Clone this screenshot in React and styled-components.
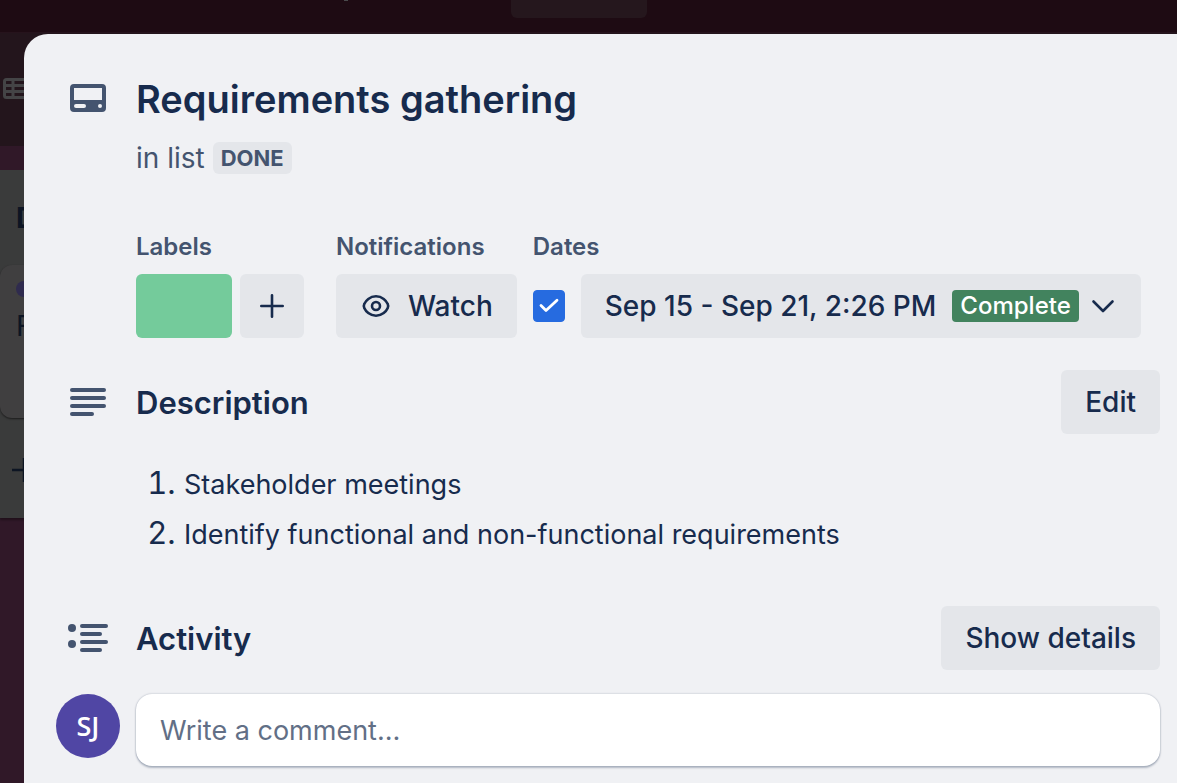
import React from "react";
import styled, { createGlobalStyle } from "styled-components";

const GlobalStyle = createGlobalStyle`
  *, *::before, *::after { box-sizing: border-box; }
  html, body, #root { height: 100%; }
  body {
    margin: 0;
    overflow: hidden;
    background: #301828;
    color: #172b4d;
    font-family: Inter, "Liberation Sans", sans-serif;
    -webkit-font-smoothing: antialiased;
  }
  h1, h2, h3, ol, p { margin: 0; padding: 0; }
  button, input { font-family: inherit; color: inherit; }
`;

/* Dimmed board behind the card dialog */
const Board = styled.div`
  display: flex;
  flex-direction: column;
  min-height: 100%;
`;

const TopBar = styled.div`
  display: flex;
  align-items: flex-start;
  height: 32px;
  padding-left: 344px;
  gap: 163px;
  background: #1e0b13;
`;

const MenuRemnant = styled.span`
  width: 4px;
  height: 1px;
  background: #4a4a4c;
`;

const CreateButton = styled.span`
  width: 136px;
  height: 18px;
  border-radius: 0 0 6px 6px;
  background: #25171d;
`;

const BoardHeader = styled.div`
  height: 114px;
  padding: 45px 0 0 3px;
  border-top: 1px solid #26131c;
  background: #23151c;
  color: #444446;
`;

const BoardList = styled.section`
  width: 300px;
  height: 348px;
  margin-top: 24px;
  padding-top: 30px;
  background: #3a3b3b;
  color: #0d1523;
  box-shadow: 0 2px 2px #00000055;
`;

const BoardListTitle = styled.h3`
  height: 65px;
  padding-left: 16px;
  font-size: 28px;
  line-height: 36px;
  font-weight: 700;
`;

const BoardCard = styled.div`
  height: 153px;
  padding: 16px 0 0 16px;
  border-radius: 12px;
  background: #403f40;
  box-shadow: 0 1px 2px #00000088;
  font-size: 28px;
  line-height: 40px;
`;

const BoardCardLabel = styled.div`
  width: 80px;
  height: 16px;
  margin-bottom: 9px;
  border-radius: 8px;
  background: #2f2b4e;
`;

const AddIcon = styled.svg`
  display: block;
  margin: 40px 0 0 12px;
`;

/* Card dialog */
const Dialog = styled.main`
  position: fixed;
  inset: 34px 0 0 24px;
  display: flex;
  flex-direction: column;
  padding: 40px 17px 0 32px;
  overflow: hidden;
  border-top-left-radius: 24px;
  background: #f0f1f4;
`;

const Row = styled.div`
  display: grid;
  grid-template-columns: 64px minmax(0, 1fr);
  column-gap: 16px;
  align-items: ${(p) => p.$align || "center"};
`;

const IconCell = styled.div`
  display: flex;
  justify-content: center;
  color: #44546f;
`;

const Indented = styled.div`
  margin-top: ${(p) => p.$top}px;
  padding-left: 80px;
`;

const Title = styled.h1`
  padding-top: 2px;
  font-size: 38px;
  line-height: 46px;
  font-weight: 600;
`;

const ListLine = styled.p`
  display: flex;
  align-items: center;
  gap: 8px;
  font-size: 28px;
  line-height: 32px;
  color: #44546f;
`;

const ListLink = styled.a`
  padding: 0 8px;
  border-radius: 6px;
  background: #e4e6ea;
  color: #44546f;
  font-size: 22px;
  font-weight: 700;
  text-decoration: none;
`;

const Fields = styled.div`
  display: flex;
  gap: ${(p) => p.$gap || 32}px;
`;

const Field = styled.div`
  display: flex;
  flex-direction: column;
  gap: 14px;
`;

const fieldHeading = `
  font-size: 24px;
  line-height: 26px;
  font-weight: 600;
  color: #44546f;
`;
const FieldTitle = styled.h3`${fieldHeading}`;
const FieldLabel = styled.label`${fieldHeading}`;

const FieldControls = styled.div`
  display: flex;
  align-items: center;
  gap: ${(p) => p.$gap}px;
`;

const Button = styled.button`
  display: flex;
  align-items: center;
  justify-content: center;
  flex: none;
  height: 64px;
  padding: 0 ${(p) => (p.$square ? 0 : 24)}px;
  width: ${(p) => (p.$square ? "64px" : "auto")};
  border: 0;
  border-radius: 6px;
  background: #e4e6ea;
  font-size: 28px;
  line-height: 40px;
  font-weight: 500;
  white-space: nowrap;
  cursor: pointer;
`;

const LabelSwatch = styled.button`
  width: 96px;
  height: 64px;
  border: 0;
  border-radius: 6px;
  background: #74cb9b;
  cursor: pointer;
`;

const WatchIcon = styled.svg`
  margin-right: 16px;
`;

const CheckWrap = styled.span`
  position: relative;
  display: flex;
  width: 32px;
  height: 32px;
`;

const Checkbox = styled.input`
  appearance: none;
  width: 32px;
  height: 32px;
  margin: 0;
  border: 1px solid #8590a2;
  border-radius: 4px;
  background: #fff;
  cursor: pointer;
  &:checked { background: #266be0; border-color: #266be0; }
  &:not(:checked) + svg { display: none; }
`;

const CheckMark = styled.svg`
  position: absolute;
  inset: 0;
  pointer-events: none;
`;

const Status = styled.span`
  margin: 0 10px 0 16px;
  padding: 0 8px;
  border-radius: 4px;
  background: #42835e;
  color: #fff;
  font-size: 24px;
  line-height: 32px;
  font-weight: 500;
`;

const SectionHead = styled.div`
  display: flex;
  align-items: center;
  justify-content: space-between;
`;

const SectionTitle = styled.h2`
  padding-top: 2px;
  font-size: 31px;
  line-height: 40px;
  font-weight: 600;
`;

const Steps = styled.ol`
  display: flex;
  flex-direction: column;
  gap: 10px;
  padding-left: 48px;
  font-size: 31px;
  line-height: 40px;
`;

const StepText = styled.span`
  font-size: 27px;
  line-height: 32px;
`;

const Avatar = styled.div`
  display: grid;
  place-items: center;
  width: 64px;
  height: 64px;
  border-radius: 50%;
  background: #5046a4;
  color: #fff;
  font-family: "Open Sans", "Noto Sans", sans-serif;
  font-size: 27px;
  line-height: 32px;
  font-weight: 600;
`;

const CommentInput = styled.input`
  width: 100%;
  height: 72px;
  padding: 0 24px;
  border: 0;
  border-radius: 16px;
  background: #fff;
  box-shadow: 0 2px 2px #091e4240, 0 0 2px #091e424f;
  font-size: 27px;
  outline: none;
  &::placeholder { color: #626f86; opacity: 1; }
`;

const Spaced = styled.section`
  margin-top: ${(p) => p.$top}px;
`;

function CardIcon() {
  return (
    <svg width="36" height="28" viewBox="0 0 36 28" aria-hidden="true">
      <path
        fill="currentColor"
        fillRule="evenodd"
        d="M4 0h28a4 4 0 0 1 4 4v20a4 4 0 0 1-4 4H4a4 4 0 0 1-4-4V4a4 4 0 0 1 4-4zM4 4v12h28V4zM6 20a2 2 0 0 0 0 4h8a2 2 0 0 0 0-4zM30 20a2 2 0 1 0 0 4a2 2 0 0 0 0-4z"
      />
    </svg>
  );
}

function TextIcon() {
  return (
    <svg width="36" height="28" viewBox="0 0 36 28" fill="currentColor" aria-hidden="true">
      <rect width="36" height="4" rx="2" />
      <rect y="8" width="36" height="4" rx="2" />
      <rect y="16" width="36" height="4" rx="2" />
      <rect y="24" width="24" height="4" rx="2" />
    </svg>
  );
}

function ActivityIcon() {
  return (
    <svg width="40" height="28" viewBox="0 0 40 28" fill="currentColor" aria-hidden="true">
      <circle cx="4" cy="4" r="4" />
      <circle cx="4" cy="20" r="4" />
      <rect x="12" width="28" height="4" rx="2" />
      <rect x="12" y="8" width="22" height="4" rx="2" />
      <rect x="12" y="16" width="28" height="4" rx="2" />
      <rect x="12" y="24" width="22" height="4" rx="2" />
    </svg>
  );
}

export default function App() {
  return (
    <>
      <GlobalStyle />
      <Board aria-hidden="true">
        <TopBar>
          <MenuRemnant />
          <CreateButton />
        </TopBar>
        <BoardHeader>
          <svg width="28" height="21" viewBox="0 0 28 21" fill="none" stroke="currentColor" strokeWidth="3">
            <rect x="1.5" y="1.5" width="25" height="18" rx="2" />
            <path d="M2 7.5h24M2 13.5h24M10 2v17" strokeWidth="3" />
          </svg>
        </BoardHeader>
        <BoardList>
          <BoardListTitle>D</BoardListTitle>
          <BoardCard>
            <BoardCardLabel />
            F
          </BoardCard>
          <AddIcon width="24" height="24" viewBox="0 0 24 24" stroke="currentColor" strokeWidth="2.5">
            <path d="M0 12h24M12 0v24" />
          </AddIcon>
        </BoardList>
      </Board>

      <Dialog role="dialog" aria-labelledby="card-title">
        <Row>
          <IconCell><CardIcon /></IconCell>
          <Title id="card-title">Requirements gathering</Title>
        </Row>
        <Indented $top={20}>
          <ListLine>
            in list <ListLink href="#done">DONE</ListLink>
          </ListLine>
        </Indented>

        <Indented $top={60}>
          <Fields $gap={16}>
            <Fields>
              <Field>
                <FieldTitle>Labels</FieldTitle>
                <FieldControls $gap={8}>
                  <LabelSwatch aria-label="Green label" />
                  <Button $square aria-label="Add label">
                    <svg width="24" height="24" viewBox="0 0 24 24" fill="none" stroke="currentColor" strokeWidth="2.6" strokeLinecap="round" aria-hidden="true">
                      <path d="M1.3 12h21.400M12 1.300v21.400" />
                    </svg>
                  </Button>
                </FieldControls>
              </Field>
              <Field>
                <FieldTitle>Notifications</FieldTitle>
                <Button>
                  <WatchIcon width="32" height="32" viewBox="0 0 32 32" fill="none" stroke="currentColor" strokeWidth="2.6" aria-hidden="true">
                    <path d="M16 6.3c6.4 0 10.3 4.5 11.6 7.4a5 5 0 0 1 0 4.600c-1.300 2.900-5.200 7.400-11.600 7.400s-10.300-4.500-11.600-7.400a5 5 0 0 1 0-4.600C5.700 10.800 9.600 6.300 16 6.300z" />
                    <circle cx="16" cy="16" r="4" />
                  </WatchIcon>
                  Watch
                </Button>
              </Field>
            </Fields>
            <Field>
              <FieldLabel htmlFor="dates-complete">Dates</FieldLabel>
              <FieldControls $gap={16}>
                <CheckWrap>
                  <Checkbox id="dates-complete" type="checkbox" defaultChecked />
                  <CheckMark width="32" height="32" viewBox="0 0 32 32" fill="none" stroke="#fff" strokeWidth="2.800" strokeLinecap="round" strokeLinejoin="round" aria-hidden="true">
                    <path d="M8 15.500l5 5L24 10.200" />
                  </CheckMark>
                </CheckWrap>
                <Button>
                  Sep 15 - Sep 21, 2:26 PM
                  <Status>Complete</Status>
                  <svg width="28" height="24" viewBox="0 0 28 24" fill="none" stroke="currentColor" strokeWidth="2.600" strokeLinecap="round" strokeLinejoin="round" aria-hidden="true">
                    <path d="M4.500 7.500l9.500 9.500L23.500 7.500" />
                  </svg>
                </Button>
              </FieldControls>
            </Field>
          </Fields>
        </Indented>

        <Spaced $top={32}>
          <Row>
            <IconCell><TextIcon /></IconCell>
            <SectionHead>
              <SectionTitle>Description</SectionTitle>
              <Button>Edit</Button>
            </SectionHead>
          </Row>
        </Spaced>
        <Indented $top={29}>
          <Steps>
            <li><StepText>Stakeholder meetings</StepText></li>
            <li><StepText>Identify functional and non-functional requirements</StepText></li>
          </Steps>
        </Indented>

        <Spaced $top={53}>
          <Row>
            <IconCell><ActivityIcon /></IconCell>
            <SectionHead>
              <SectionTitle>Activity</SectionTitle>
              <Button>Show details</Button>
            </SectionHead>
          </Row>
        </Spaced>
        <Spaced $top={24}>
          <Row $align="start">
            <Avatar>SJ</Avatar>
            <CommentInput type="text" aria-label="Write a comment" placeholder="Write a comment…" />
          </Row>
        </Spaced>
      </Dialog>
    </>
  );
}
